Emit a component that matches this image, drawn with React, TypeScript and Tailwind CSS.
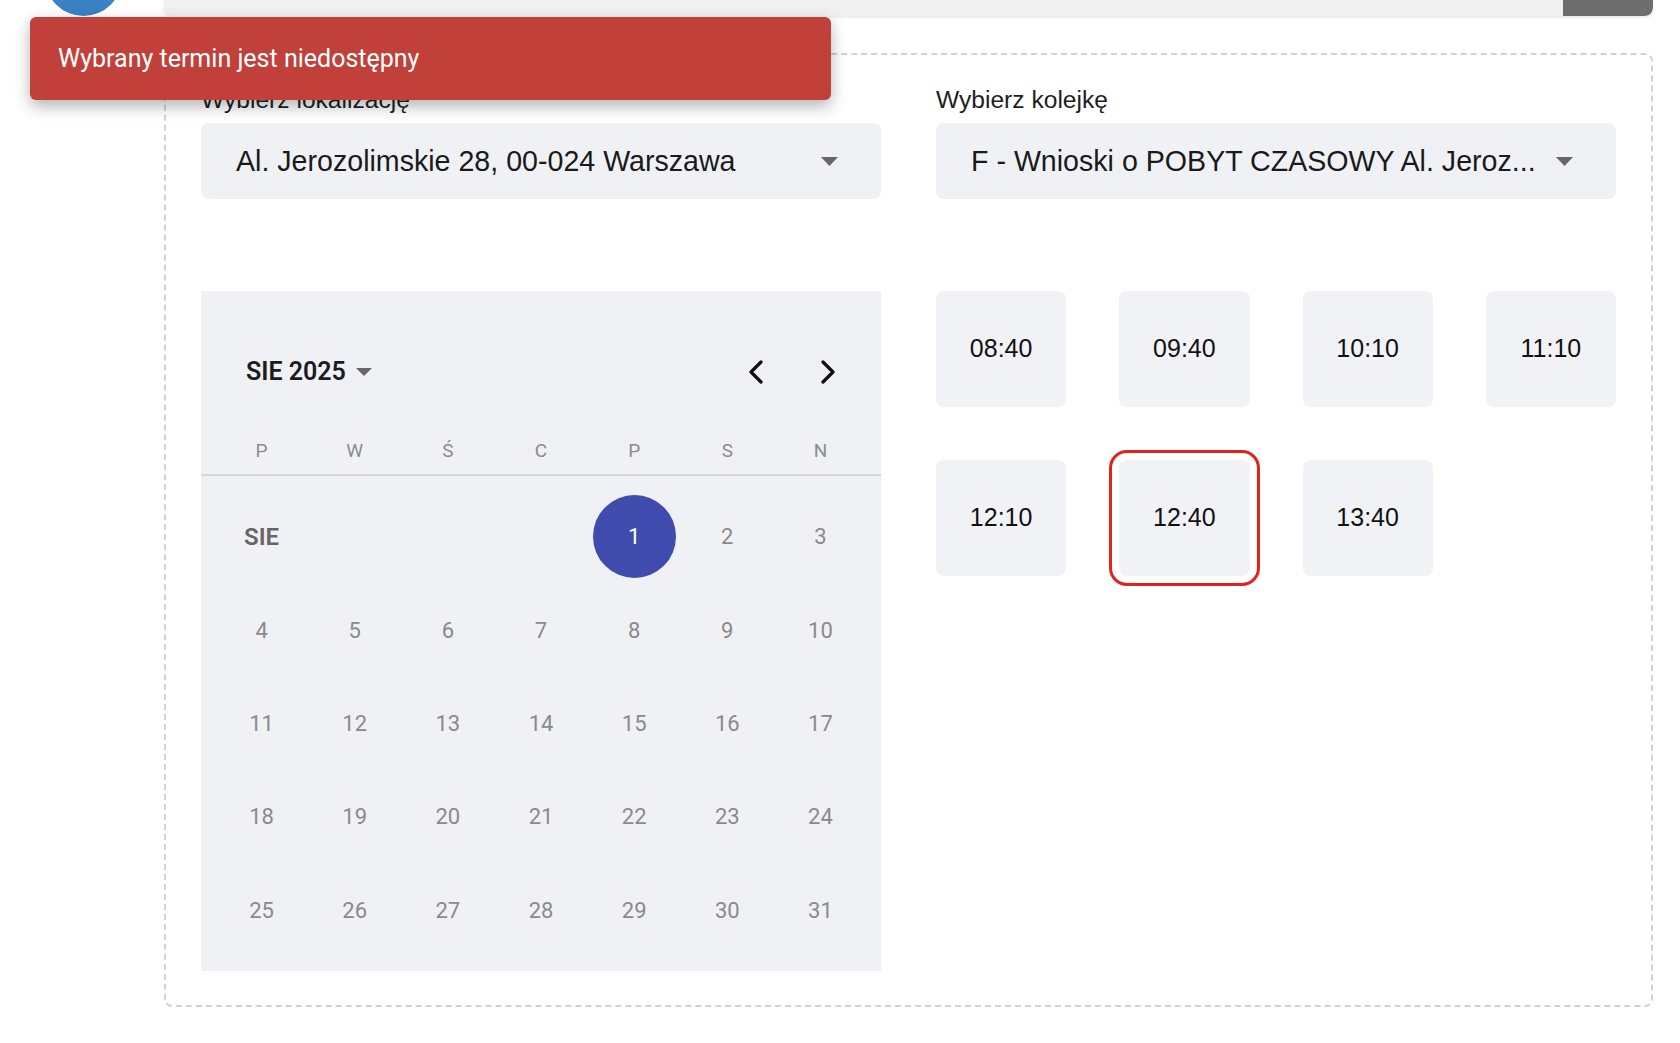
import React from "react";

const slots = ["08:40", "09:40", "10:10", "11:10", "12:10", "12:40", "13:40"];
const weekDays = ["P", "W", "Ś", "C", "P", "S", "N"];

const Caret = ({ className = "" }: { className?: string }) => (
  <svg width="17" height="9" viewBox="0 0 17 9" className={className}>
    <path d="M0 0 L17 0 L8.5 9 Z" fill="#666666" />
  </svg>
);

const Chevron = ({ dir }: { dir: "left" | "right" }) => (
  <svg width="16" height="24" viewBox="0 0 16 24">
    <path
      d={dir === "left" ? "M13 2 L3 12 L13 22" : "M3 2 L13 12 L3 22"}
      fill="none"
      stroke="#111111"
      strokeWidth="3.2"
      strokeLinecap="round"
      strokeLinejoin="round"
    />
  </svg>
);

const SelectBox = ({ text }: { text: string }) => (
  <div className="flex items-center justify-between h-[76px] rounded-lg bg-[#f0f1f5] pl-[35px] pr-[43px]">
    <span className="text-[28.6px] text-[#1a1a1a] whitespace-nowrap">{text}</span>
    <Caret />
  </div>
);

const App = () => {
  // first week starts on friday (1 Aug 2025)
  const cells: (number | null)[] = [null, null, null, null];
  for (let d = 1; d <= 31; d++) cells.push(d);

  return (
    <div className="relative w-full h-[1043px] bg-white overflow-hidden font-['Liberation_Sans',Arial,sans-serif]">
      {/* top bar */}
      <div className="flex items-end h-4">
        <div className="w-[77px] h-[77px] shrink-0 rounded-full bg-[#3a82c4] ml-[45px]"></div>
        <div className="flex h-4 w-[1489px] ml-[42px] rounded-b-lg bg-[#f0f0f0] shadow-[0_1px_3px_rgba(0,0,0,0.12)] overflow-hidden">
          <div className="flex-1"></div>
          <div className="w-[90px] bg-[#6e6e6e] rounded-br-lg"></div>
        </div>
      </div>

      {/* main panel */}
      <div className="ml-[164px] mt-[37px] w-[1489px] h-[954px] border-2 border-dashed border-[#d2d2d2] rounded-lg pt-[31px] pl-[35px] pr-[35px]">
        <div className="grid grid-cols-2 gap-x-[55px]">
          <div>
            <p className="text-[24.6px] leading-[28px] text-[#1e1e1e]">Wybierz lokalizację</p>
            <div className="mt-[9px]">
              <SelectBox text="Al. Jerozolimskie 28, 00-024 Warszawa" />
            </div>
          </div>
          <div>
            <p className="text-[24.6px] leading-[28px] text-[#1e1e1e]">Wybierz kolejkę</p>
            <div className="mt-[9px]">
              <SelectBox text="F - Wnioski o POBYT CZASOWY Al. Jeroz..." />
            </div>
          </div>
        </div>

        <div className="grid grid-cols-2 gap-x-[55px] mt-[92px]">
          {/* calendar */}
          <div className="h-[680px] bg-[#f0f1f5] font-['Roboto',sans-serif]">
            <div className="flex items-center justify-between h-12 mt-[57px] pl-[45px] pr-[45px]">
              <div className="flex items-center gap-[10px]">
                <span className="text-[25px] font-semibold text-[#1c1c1c]">SIE 2025</span>
                <svg width="16" height="8" viewBox="0 0 16 8">
                  <path d="M0 0 L16 0 L8 8 Z" fill="#666666" />
                </svg>
              </div>
              <div className="flex items-center gap-[56px]">
                <Chevron dir="left" />
                <Chevron dir="right" />
              </div>
            </div>

            <div className="grid grid-cols-7 h-[48px] mt-[32px] px-[14px] items-center border-b-2 border-[#d6d7dc]">
              {weekDays.map((d, i) => (
                <span key={i} className="text-center text-[19px] text-[#8c8c8c]">{d}</span>
              ))}
            </div>

            <div className="grid grid-cols-7 px-[14px] mt-[14px]">
              {cells.map((d, i) => (
                <div key={i} className="flex items-center justify-center h-[93.4px]">
                  {i === 0 ? (
                    <span className="text-[24px] font-semibold text-[#666666]">SIE</span>
                  ) : d === 1 ? (
                    <span className="flex items-center justify-center w-[83px] h-[83px] rounded-full bg-[#3f4cae] text-white text-[22px]">1</span>
                  ) : d ? (
                    <span className="text-[22px] text-[#8a8a8a]">{d}</span>
                  ) : null}
                </div>
              ))}
            </div>
          </div>

          {/* time slots */}
          <div className="grid grid-cols-4 gap-x-[53px] gap-y-[53px] content-start">
            {slots.map((s) => (
              <button
                key={s}
                className={
                  "h-[116px] rounded-lg bg-[#f1f2f6] text-[25px] text-[#111111] " +
                  (s === "12:40" ? "outline-[3px] outline-solid outline-[#e0231c] outline-offset-[7px]" : "")
                }
              >
                {s}
              </button>
            ))}
          </div>
        </div>
      </div>

      {/* toast */}
      <div className="absolute left-[30px] top-[17px] w-[801px] h-[83px] flex items-center pl-[28px] rounded-md bg-[#c1403a] shadow-[0_6px_16px_rgba(0,0,0,0.3)]">
        <span className="text-white text-[25px] font-['Roboto',sans-serif]">Wybrany termin jest niedostępny</span>
      </div>
    </div>
  );
};

export default App;
